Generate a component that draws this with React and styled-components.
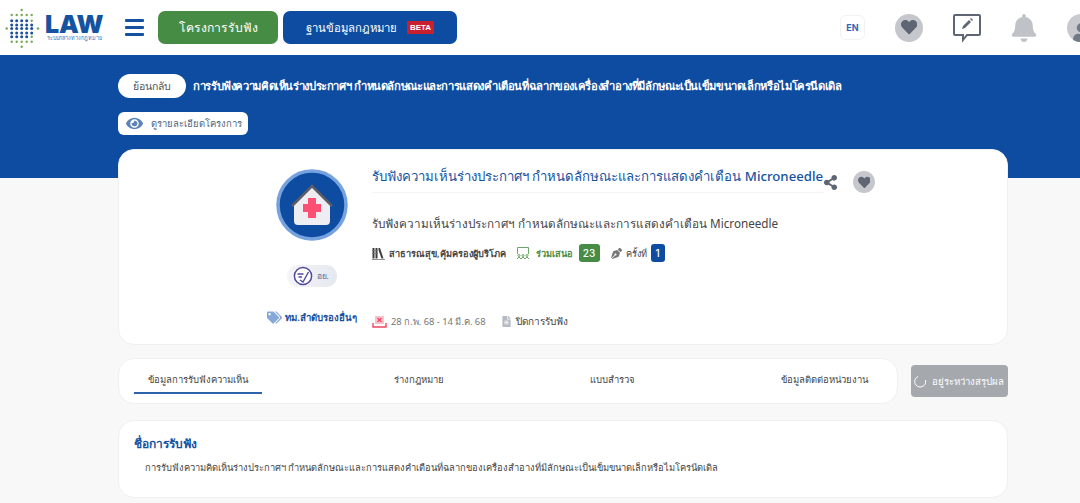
import React from "react";
import styled, { createGlobalStyle } from "styled-components";
import { FaHeart, FaShareAlt, FaBell, FaUser, FaTags, FaEye, FaFileAlt, FaPenNib } from "react-icons/fa";

const Global = createGlobalStyle`
  html, body { margin: 0; padding: 0; background: #f8f8f9; }
  body { font-family: "Noto Sans", "Inter", "DejaVu Sans", sans-serif; overflow: hidden; height: 503px; }
  * { box-sizing: border-box; }
`;

// g = green dot, b = blue dot, one row per line of the mark
const columns = [6.7, 11.7, 16.7, 21.7, 26.7, 31.7, 38];
const logoRows = [
  { y: 9, dots: "...g..." },
  { y: 14, dots: ".ggggg." },
  { y: 19.7, dots: ".bbbbg." },
  { y: 24, dots: ".bbbbb." },
  { y: 27.5, dots: "gbbbbbg" },
  { y: 32, dots: ".bbbbb." },
  { y: 35.7, dots: ".bbbbg." },
  { y: 40.7, dots: ".ggggg." },
  { y: 45.7, dots: "...g..." },
];

function LogoMark() {
  return (
    <svg width="36" height="44" viewBox="5 5 36 44">
      {logoRows.map((row) =>
        row.dots.split("").map((d, i) =>
          d === "." ? null : (
            <circle
              key={row.y + "-" + i}
              cx={columns[i]}
              cy={row.y}
              r={d === "b" ? 1.5 : 1.2}
              fill={d === "b" ? "#1c4f9e" : "#78a858"}
            />
          )
        )
      )}
    </svg>
  );
}

function HouseBadge() {
  return (
    <svg width="72" height="72" viewBox="0 0 72 72">
      <circle cx="36" cy="36" r="34" fill="#0d4ca0" stroke="#76a3e0" strokeWidth="3.5" />
      <path d="M18 36 L36 17 L54 36 V52 Q54 56 50 56 H22 Q18 56 18 52 Z" fill="#eeeef2" />
      <path d="M16 37 L36 17 L56 37" fill="none" stroke="#5c5c66" strokeWidth="2.6" />
      <path d="M32 29 H40 V35 H45 V43 H40 V49 H32 V43 H27 V35 H32 Z" fill="#fb4f73" />
    </svg>
  );
}

function MinistrySeal() {
  return (
    <svg width="20" height="20" viewBox="0 0 20 20">
      <circle cx="10" cy="10" r="8.6" fill="#fff" stroke="#4f4a9c" strokeWidth="1.5" />
      <path d="M4.5 8 H10.5 M5.5 11 H9 M7 14 L10 16 L15.5 6" fill="none" stroke="#4f4a9c" strokeWidth="1.4" />
    </svg>
  );
}

function Spinner() {
  return (
    <svg width="13" height="13" viewBox="0 0 13 13">
      <path d="M4 1.5 A5.5 5.5 0 1 0 11.5 5" fill="none" stroke="#fff" strokeWidth="1" />
    </svg>
  );
}

function BookIcon() {
  return (
    <svg width="13" height="13" viewBox="0 0 13 13">
      <path d="M0.5 1 H2.5 V11.5 H0.5 Z M3.5 1 H5.5 V11.5 H3.5 Z M6.5 1 H8 L11.5 11.5 H9.5 L6.5 3 Z" fill="#3c3c3c" />
      <path d="M0 12.5 H13 M0 3.5 H6 M0 6.5 H6" stroke="#777" strokeWidth="0.8" />
    </svg>
  );
}

function GroupIcon() {
  return (
    <svg width="14" height="14" viewBox="0 0 14 14" fill="none" stroke="#5f9a58" strokeWidth="0.9">
      <path d="M1.5 8 V1.5 H12.5 V8" />
      <circle cx="3" cy="9.5" r="1" />
      <circle cx="7" cy="9.5" r="1" />
      <circle cx="11" cy="9.5" r="1" />
      <path d="M1 13 L3 11 L5 13 M5 13 L7 11 L9 13 M9 13 L11 11 L13 13" />
    </svg>
  );
}

function CalendarClosed() {
  return (
    <svg width="15" height="13" viewBox="0 0 15 13">
      <rect x="3" y="1" width="9" height="8" fill="#f8c4cc" />
      <path d="M5.5 3 L9.5 7 M9.5 3 L5.5 7" stroke="#f0445f" strokeWidth="1.2" />
      <path d="M1 8 V12 H14 V8" fill="none" stroke="#f0445f" strokeWidth="1.4" />
    </svg>
  );
}

function FeedbackIcon() {
  return (
    <svg width="30" height="30" viewBox="0 0 30 30" fill="none">
      <path d="M3 2 H27 Q28 2 28 3 V21 Q28 22 27 22 H15 L11 27 V22 H3 Q2 22 2 21 V3 Q2 2 3 2 Z" stroke="#5e6673" strokeWidth="2" />
      <path d="M10 16 L11 13 L17 7 L19 9 L13 15 Z" fill="#5e6673" />
      <path d="M18 6 L19 5 L21 7 L20 8 Z" fill="#5e6673" />
    </svg>
  );
}

const Header = styled.header`
  height: 55px;
  background: #fff;
  display: flex;
  align-items: center;
  padding-left: 5px;
  overflow: hidden;
  position: relative;
  z-index: 1;
`;
const Logo = styled.div`
  display: flex;
  align-items: center;
  width: 99px;
  flex-shrink: 0;
`;
const LogoText = styled.div`
  display: flex;
  flex-direction: column;
  margin-left: 4px;
`;
const LogoName = styled.span`
  font: 900 25px/21px "Inter", sans-serif;
  color: #1553a0;
  letter-spacing: -0.2px;
`;
const LogoSub = styled.span`
  font-size: 5.5px;
  line-height: 7px;
  margin-left: 2px;
  color: #3b74b8;
  white-space: nowrap;
`;
const Burger = styled.div`
  width: 19px;
  margin: 0 14px 0 21px;
  display: flex;
  flex-direction: column;
  gap: 4px;
  span {
    height: 3px;
    background: #1553a0;
    border-radius: 1px;
  }
`;
const NavButton = styled.div`
  height: 33px;
  width: ${(p) => p.$w}px;
  margin-right: 5px;
  border-radius: 7px;
  background: ${(p) => p.$bg};
  color: #fff;
  font-size: ${(p) => p.$size}px;
  display: flex;
  align-items: center;
  justify-content: center;
  gap: 10px;
  white-space: nowrap;
`;
const BetaTag = styled.span`
  background: #c8202f;
  color: #fff;
  font: 700 8px/13px "Liberation Sans", sans-serif;
  padding: 0 3px;
  border-radius: 1px;
`;
const HeaderRight = styled.div`
  display: flex;
  align-items: center;
  margin-left: auto;
  margin-right: -15px;
  flex-shrink: 0;
`;
const LangBox = styled.div`
  width: 25px;
  height: 25px;
  border: 1px solid #f2f2f4;
  border-radius: 6px;
  color: #2f67b5;
  font: 700 9px "Inter", sans-serif;
  display: flex;
  align-items: center;
  justify-content: center;
  margin-right: 30px;
`;
const HeartCircle = styled.div`
  width: ${(p) => p.$size}px;
  height: ${(p) => p.$size}px;
  border-radius: 50%;
  background: #c5c7cc;
  color: #5e6673;
  display: flex;
  align-items: center;
  justify-content: center;
  font-size: ${(p) => p.$size * 0.58}px;
`;
const HeaderIcon = styled.div`
  display: flex;
  margin-left: ${(p) => p.$ml}px;
  color: #c0c2c7;
  font-size: 28px;
`;
const Avatar = styled.div`
  width: 28px;
  height: 28px;
  margin-left: 29px;
  border-radius: 50%;
  background: #c8cad0;
  color: #737a87;
  display: flex;
  align-items: flex-end;
  justify-content: center;
  overflow: hidden;
  font-size: 19px;
`;

const Band = styled.section`
  height: 123px;
  background: #0d4ca0;
  padding: 19px 118px 0;
`;
const BackRow = styled.div`
  display: flex;
  align-items: center;
  gap: 7px;
`;
const BackButton = styled.div`
  width: 68px;
  height: 24px;
  border-radius: 12px;
  background: #fff;
  color: #555;
  font-size: 10.5px;
  display: flex;
  align-items: center;
  justify-content: center;
  flex-shrink: 0;
`;
const BandTitle = styled.div`
  color: #fff;
  font-size: 11.25px;
  font-weight: 600;
  letter-spacing: -0.37px;
  white-space: nowrap;
`;
const DetailButton = styled.div`
  width: 130px;
  height: 23px;
  margin-top: 14px;
  background: #fff;
  border-radius: 6px;
  color: #54657e;
  font-size: 9.5px;
  display: flex;
  align-items: center;
  gap: 8px;
  padding-left: 8px;
  white-space: nowrap;
  svg { color: #5d82b8; font-size: 17px; }
`;

const Content = styled.main`
  margin: -29px 72px 0 118px;
  width: 890px;
  display: flex;
  flex-direction: column;
`;
const Card = styled.div`
  background: #fff;
  border: 1px solid #eff0f2;
  border-radius: 16px;
`;
const InfoCard = styled(Card)`
  height: 196px;
  display: grid;
  grid-template-columns: 253px 1fr;
`;
const LeftCol = styled.div`
  display: flex;
  flex-direction: column;
  align-items: center;
  padding: 19px 0 0 132px;
  width: 253px;
`;
const SealPill = styled.div`
  width: 50px;
  height: 22px;
  margin-top: 24px;
  border-radius: 11px;
  background: linear-gradient(90deg, #f4f5f8, #e6e8f0);
  color: #5d6a90;
  font-size: 8.5px;
  display: flex;
  align-items: center;
  gap: 4px;
  padding-left: 6px;
`;
const TagLine = styled.div`
  margin-top: 23px;
  align-self: flex-end;
  margin-right: 15px;
  display: flex;
  align-items: center;
  gap: 3px;
  color: #1b4f9a;
  font-size: 9.6px;
  font-weight: 600;
  white-space: nowrap;
  svg { color: #86a8d8; font-size: 15px; }
`;
const RightCol = styled.div`
  padding-top: 11px;
  display: flex;
  flex-direction: column;
  position: relative;
`;
const TitleRow = styled.div`
  display: flex;
  align-items: center;
  height: 32px;
  width: 452px;
  border-bottom: 1px solid #f3f4f5;
`;
const Title = styled.div`
  color: #1553a0;
  font-size: 13.2px;
  font-weight: 500;
  white-space: nowrap;
`;
const TitleActions = styled.div`
  position: absolute;
  top: 21px;
  left: 451px;
  display: flex;
  align-items: center;
  gap: 15px;
  svg { color: #5e6673; }
`;
const Subtitle = styled.div`
  margin-top: 22px;
  color: #444;
  font-size: 11.7px;
  white-space: nowrap;
`;
const MetaRow = styled.div`
  display: flex;
  align-items: center;
  margin-top: 11px;
  height: 18px;
  font-size: 9.2px;
  white-space: nowrap;
`;
const MetaItem = styled.span`
  display: flex;
  align-items: center;
  gap: ${(p) => p.$gap || 4}px;
  margin-right: ${(p) => p.$mr || 0}px;
  color: ${(p) => p.$color || "#444"};
  font-weight: ${(p) => p.$weight || 400};
  font-size: ${(p) => p.$size || "inherit"};
`;
const Count = styled.span`
  background: ${(p) => p.$bg};
  color: #fff;
  border-radius: 3px;
  min-width: ${(p) => p.$w}px;
  height: 18px;
  font: 500 10px "Inter", sans-serif;
  display: inline-flex;
  align-items: center;
  justify-content: center;
`;
const DateRow = styled.div`
  display: flex;
  align-items: center;
  margin-top: 52px;
  font-size: 10px;
  color: #777;
  white-space: nowrap;
`;

const TabRow = styled.div`
  display: flex;
  align-items: center;
  gap: 13px;
  margin-top: 13px;
`;
const TabCard = styled(Card)`
  width: 780px;
  height: 46px;
  padding: 0 15px;
  display: flex;
  justify-content: space-between;
`;
const Tab = styled.div`
  height: 35px;
  padding: 8px 14px 0;
  display: flex;
  align-items: center;
  justify-content: center;
  color: #444;
  font-size: 9.5px;
  white-space: nowrap;
  border-bottom: 2px solid ${(p) => (p.$active ? "#2f62ac" : "transparent")};
`;
const SummaryButton = styled.div`
  width: 97px;
  height: 32px;
  background: #a5a8ad;
  border-radius: 4px;
  color: #fff;
  font-size: 9.6px;
  display: flex;
  align-items: center;
  justify-content: center;
  gap: 5px;
  padding-right: 2px;
  white-space: nowrap;
`;
const NameCard = styled(Card)`
  margin-top: 16px;
  height: 78px;
  padding: 13px 15px 0;
`;
const NameTitle = styled.div`
  color: #1553a0;
  font-size: 12px;
  font-weight: 600;
`;
const NameBody = styled.div`
  margin: 7px 0 0 11px;
  color: #444;
  font-size: 9.35px;
  white-space: nowrap;
`;

export default function App() {
  return (
    <>
      <Global />
      <Header>
        <Logo>
          <LogoMark />
          <LogoText>
            <LogoName>LAW</LogoName>
            <LogoSub>ระบบกลางทางกฎหมาย</LogoSub>
          </LogoText>
        </Logo>
        <Burger><span /><span /><span /></Burger>
        <NavButton $w={120} $bg="#478c44" $size={12.2}>โครงการรับฟัง</NavButton>
        <NavButton $w={174} $bg="#0d4ca0" $size={11.3}>ฐานข้อมูลกฎหมาย <BetaTag>BETA</BetaTag></NavButton>
        <HeaderRight>
          <LangBox>EN</LangBox>
          <HeartCircle $size={28}><FaHeart /></HeartCircle>
          <HeaderIcon $ml={29}><FeedbackIcon /></HeaderIcon>
          <HeaderIcon $ml={28}><FaBell /></HeaderIcon>
          <Avatar><FaUser /></Avatar>
        </HeaderRight>
      </Header>
      <Band>
        <BackRow>
          <BackButton>ย้อนกลับ</BackButton>
          <BandTitle>การรับฟังความคิดเห็นร่างประกาศฯ กำหนดลักษณะและการแสดงคำเตือนที่ฉลากของเครื่องสำอางที่มีลักษณะเป็นเข็มขนาดเล็กหรือไมโครนีดเดิล</BandTitle>
        </BackRow>
        <DetailButton><FaEye />ดูรายละเอียดโครงการ</DetailButton>
      </Band>
      <Content>
        <InfoCard>
          <LeftCol>
            <HouseBadge />
            <SealPill><MinistrySeal />อย.</SealPill>
            <TagLine><FaTags />ทม.ลำดับรองอื่นๆ</TagLine>
          </LeftCol>
          <RightCol>
            <TitleRow>
              <Title>รับฟังความเห็นร่างประกาศฯ กำหนดลักษณะและการแสดงคำเตือน Microneedle</Title>
            </TitleRow>
            <TitleActions>
              <FaShareAlt size={15} />
              <HeartCircle $size={22}><FaHeart /></HeartCircle>
            </TitleActions>
            <Subtitle>รับฟังความเห็นร่างประกาศฯ กำหนดลักษณะและการแสดงคำเตือน Microneedle</Subtitle>
            <MetaRow>
              <MetaItem $mr={10} $weight={600}><BookIcon />สาธารณสุข,คุ้มครองผู้บริโภค</MetaItem>
              <MetaItem $mr={11} $color="#478c44" $weight={600} $gap={6}><GroupIcon />ร่วมเสนอ <Count $bg="#478c44" $w={21}>23</Count></MetaItem>
              <MetaItem><FaPenNib color="#777" size={11} />ครั้งที่ <Count $bg="#0d4ca0" $w={14}>1</Count></MetaItem>
            </MetaRow>
            <DateRow>
              <MetaItem $mr={15} $color="#777" $size="9.4px"><CalendarClosed />28 ก.พ. 68 - 14 มี.ค. 68</MetaItem>
              <MetaItem><FaFileAlt color="#b7bac2" size={11} />ปิดการรับฟัง</MetaItem>
            </DateRow>
          </RightCol>
        </InfoCard>
        <TabRow>
          <TabCard>
            <Tab $active>ข้อมูลการรับฟังความเห็น</Tab>
            <Tab>ร่างกฎหมาย</Tab>
            <Tab>แบบสำรวจ</Tab>
            <Tab>ข้อมูลติดต่อหน่วยงาน</Tab>
          </TabCard>
          <SummaryButton><Spinner />อยู่ระหว่างสรุปผล</SummaryButton>
        </TabRow>
        <NameCard>
          <NameTitle>ชื่อการรับฟัง</NameTitle>
          <NameBody>การรับฟังความคิดเห็นร่างประกาศฯ กำหนดลักษณะและการแสดงคำเตือนที่ฉลากของเครื่องสำอางที่มีลักษณะเป็นเข็มขนาดเล็กหรือไมโครนีดเดิล</NameBody>
        </NameCard>
      </Content>
    </>
  );
}
